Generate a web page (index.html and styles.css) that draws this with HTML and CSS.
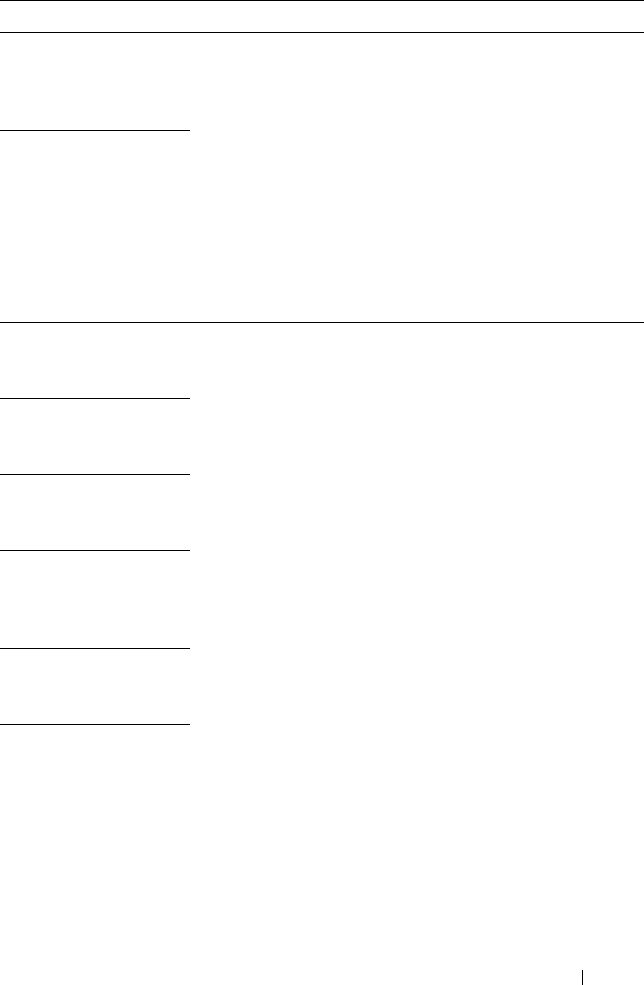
FILE: index.html
```html
<!DOCTYPE html>
<html lang="en">
<head>
<meta charset="utf-8">
<title>Table</title>
<link rel="stylesheet" href="styles.css">
</head>
<body>
<div class="table">
  <div class="head"></div>
  <div class="group group-first">
    <div class="left">
      <div class="cell h97"></div>
      <div class="cell h191"></div>
    </div>
    <div class="right"></div>
  </div>
  <div class="group group-last">
    <div class="left">
      <div class="cell h75"></div>
      <div class="cell h75"></div>
      <div class="cell h75"></div>
      <div class="cell h97"></div>
      <div class="cell h75 ruled"></div>
    </div>
    <div class="right"></div>
  </div>
</div>
<footer class="footer"><span class="bar"></span></footer>
</body>
</html>
```
FILE: styles.css
```css
html, body {
  margin: 0;
  padding: 0;
  background: #fff;
  font-family: "Liberation Serif", serif;
}
.table {
  width: 644px;
  border-top: 1px solid #000;
}
.head {
  height: 31px;
  border-bottom: 1px solid #000;
}
.group {
  display: grid;
  grid-template-columns: 190px 1fr;
}
.group-first {
  border-bottom: 1px solid #000;
}
.left {
  display: flex;
  flex-direction: column;
}
.cell {
  border-bottom: 1px solid #000;
}
.group-first .cell:last-child {
  border-bottom: none;
}
.h75 { height: 75px; }
.h97 { height: 97px; }
.h191 { height: 191px; }
.footer {
  display: flex;
  justify-content: flex-end;
  padding-right: 61px;
  margin-top: 245px;
}
.bar {
  display: block;
  width: 1px;
  height: 15px;
  background: #000;
}
```
